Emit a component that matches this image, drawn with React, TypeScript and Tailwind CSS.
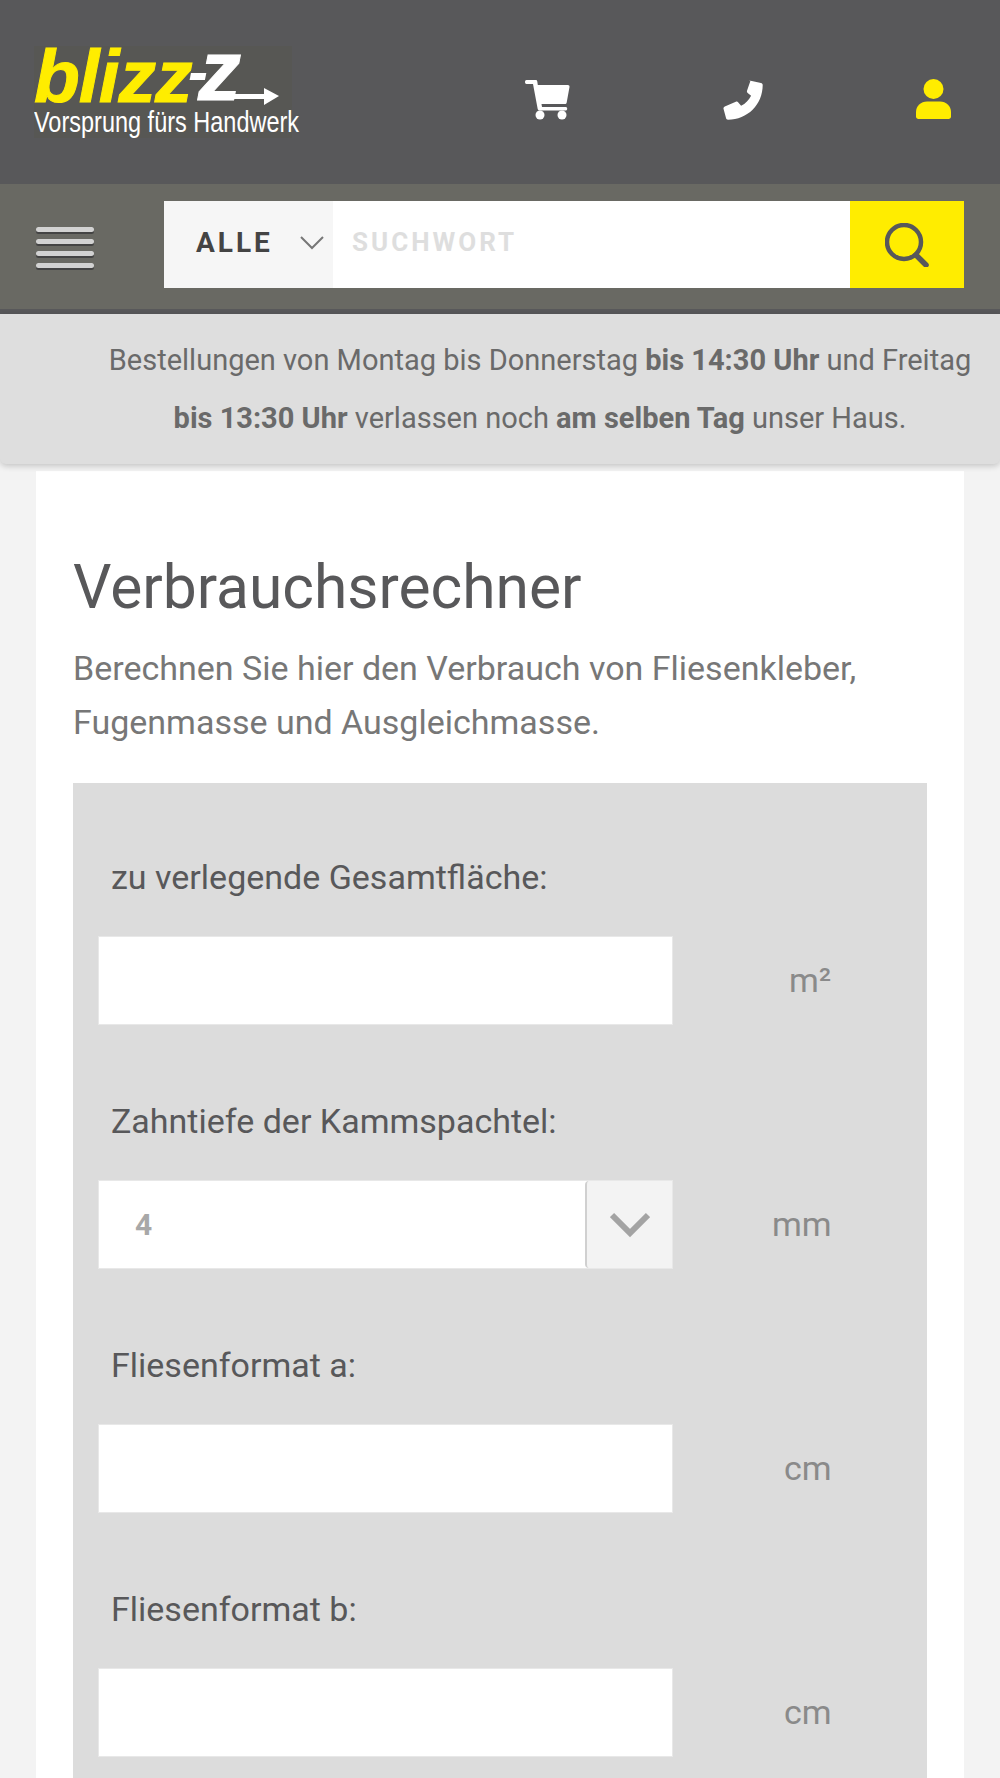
import React from "react";

const roboto = "font-['Roboto',sans-serif]";

function Cart() {
  return (
    <svg width="45" height="40" viewBox="0 0 45 40" fill="#fff" aria-hidden="true">
      <path d="M1.500 0h9c1 0 1.600.5 1.800 1.400l.5 3.600h30c1.200 0 1.900.9 1.700 2l-2.800 15.500c-.2 1-.9 1.500-1.800 1.500H16.500l.5 3h23.500c1 0 1.700.7 1.700 1.700s-.7 1.800-1.700 1.800H14.500c-1 0-1.600-.6-1.800-1.400L8 4H1.500C.6 4 0 3.100 0 2s.6-2 1.500-2z" />
      <circle cx="15" cy="35" r="4.500" />
      <circle cx="37" cy="35" r="4.500" />
    </svg>
  );
}

function Phone() {
  return (
    <svg width="40" height="40" viewBox="0 0 40 40" fill="#fff" aria-hidden="true">
      <path d="M26.500.5l11.500 2.500c1 .2 1.700 1 1.700 2C39.700 24.500 24.500 39.700 5 39.700c-1 0-1.800-.7-2-1.700L.5 28.800c-.2-1 .3-2 1.300-2.400l11-4.600c.9-.4 1.900-.1 2.500.6l2.800 3.400c4.400-2.100 7.900-5.600 10-10l-3.400-2.800c-.7-.6-1-1.600-.6-2.500l3.100-9c.1-.8.300-.8-.7-.5z" />
    </svg>
  );
}

function User() {
  return (
    <svg width="35" height="40" viewBox="0 0 35 40" fill="#ffed00" aria-hidden="true">
      <circle cx="17.500" cy="10" r="10" />
      <path d="M11 22.500h13c6 0 11 4.500 11 10.500v4.500c0 1.500-1 2.500-2.500 2.500h-30C1 40 0 39 0 37.500V33c0-6 5-10.500 11-10.500z" />
    </svg>
  );
}

function Search() {
  return (
    <svg width="44" height="44" viewBox="0 0 44 44" fill="none" stroke="#58585a" aria-hidden="true">
      <circle cx="19" cy="19" r="17" strokeWidth="4.500" />
      <path d="M31 32l10 10" strokeWidth="5.500" strokeLinecap="round" />
    </svg>
  );
}

function Field({ label, unit, select, unitClass }: { label: string; unit: string; select?: boolean; unitClass: string }) {
  return (
    <div className="h-[244px] shrink-0">
      <div className="pl-[13px] pt-[71px] h-[153px] text-[34px] leading-[46px] text-[#58585a] whitespace-nowrap">{label}</div>
      <div className="flex items-center">
        <div className="w-[575px] h-[89px] bg-white border border-[#e8e8e8] flex items-center">
          {select ? (
            <>
              <span className="flex-1 pl-[36px] text-[30px] font-bold text-[#a8a8a8]">4</span>
              <span className="w-[87px] h-[87px] bg-[#f3f3f3] border-l-2 border-[#d0d0d0] rounded-l-[4px] flex items-center justify-center">
                <svg width="40" height="26" viewBox="0 0 40 26" fill="none" stroke="#a3a3a3" strokeWidth="6" aria-hidden="true">
                  <path d="M2 3l18 18L38 3" />
                </svg>
              </span>
            </>
          ) : null}
        </div>
        <div className={"text-[34px] text-[#8a8a8a] " + unitClass}>{unit}</div>
      </div>
    </div>
  );
}

export default function App() {
  return (
    <div className={"h-[1778px] overflow-hidden bg-[#f3f3f3] flex flex-col " + roboto}>
      <header className="h-[184px] shrink-0 bg-[#58585a] flex items-start relative">
        <div className="ml-[34px] mt-[46px] w-[258px] bg-[#575754] font-['Liberation_Sans',sans-serif]">
          <div className="relative h-[60px] leading-[60px] text-[75px] font-bold italic tracking-[-1px] whitespace-nowrap">
            <span className="text-[#ffed00] [-webkit-text-stroke:1px_#ffed00]">blizz</span>
            <span className="text-white text-[60px] absolute left-[154px] top-[-4px]">-</span>
            <span className="text-white text-[86px] absolute left-[164px] top-[-6px] [-webkit-text-stroke:1px_#fff]">z</span>
            <svg className="absolute left-[196px] top-[42px]" width="50" height="18" viewBox="0 0 50 18" fill="#fff" aria-hidden="true">
              <path d="M0 6h34V0l15 8-15 9v-6H0z" />
            </svg>
          </div>
          <div className="h-[32px] leading-[32px] text-[29px] text-white whitespace-nowrap origin-left scale-x-[0.81]">
            Vorsprung fürs Handwerk
          </div>
        </div>
        <div className="absolute left-[525px] top-[80px]"><Cart /></div>
        <div className="absolute left-[723px] top-[80px]"><Phone /></div>
        <div className="absolute left-[916px] top-[79px]"><User /></div>
      </header>

      <div className="h-[130px] shrink-0 bg-[#696963] border-b-[5px] border-[#58585a] flex items-start pt-[17px]">
        <div className="ml-[36px] mt-[26px] w-[58px] flex flex-col gap-[7px]">
          {[0, 1, 2, 3].map((i) => (
            <div key={i} className="h-[5px] rounded-full bg-[#d2d2d2] shadow-[0_2px_0_#444]" />
          ))}
        </div>
        <div className="ml-[70px] w-[800px] h-[87px] flex bg-white">
          <div className="w-[169px] h-full bg-[#f6f6f6] flex items-center pl-[32px] pb-[4px]">
            <span className="text-[28px] font-bold tracking-[3px] text-[#444444]">ALLE</span>
            <svg className="ml-[27px]" width="24" height="14" viewBox="0 0 24 14" fill="none" stroke="#777" strokeWidth="2" aria-hidden="true">
              <path d="M1 1l11 11L23 1" />
            </svg>
          </div>
          <div className="flex-1 flex items-center pl-[19px] pb-[4px] text-[26px] font-bold tracking-[3px] text-[#dedede]">SUCHWORT</div>
          <div className="w-[114px] h-full bg-[#ffed00] flex items-center justify-center"><Search /></div>
        </div>
      </div>

      <div className="h-[150px] shrink-0 bg-[#dedede] rounded-b-[6px] shadow-[0_2px_6px_rgba(0,0,0,0.2)] pl-[100px] pr-[20px] pt-[17px] text-center text-[29px] leading-[58px] text-[#6a6a6a] relative z-10">
        Bestellungen von Montag bis Donnerstag <b>bis 14:30 Uhr</b> und Freitag <b>bis 13:30 Uhr</b> verlassen noch <b>am selben Tag</b> unser Haus.
      </div>

      <main className="mt-[7px] mx-[36px] bg-white flex-1 px-[37px] pt-[81px] min-h-0">
        <h1 className="text-[60.500px] leading-[72px] text-[#58585a] whitespace-nowrap">Verbrauchsrechner</h1>
        <p className="mt-[18px] text-[34px] leading-[53.500px] text-[#777777] whitespace-nowrap">
          Berechnen Sie hier den Verbrauch von Fliesenkleber,<br />Fugenmasse und Ausgleichmasse.
        </p>
        <div className="mt-[34px] bg-[#dcdcdc] pl-[25px] pr-[25px] pb-[100px]">
          <Field label="zu verlegende Gesamtfläche:" unit="m²" unitClass="ml-[116px]" />
          <Field label="Zahntiefe der Kammspachtel:" unit="mm" select unitClass="ml-[99px]" />
          <Field label="Fliesenformat a:" unit="cm" unitClass="ml-[111px]" />
          <Field label="Fliesenformat b:" unit="cm" unitClass="ml-[111px]" />
        </div>
      </main>
    </div>
  );
}
